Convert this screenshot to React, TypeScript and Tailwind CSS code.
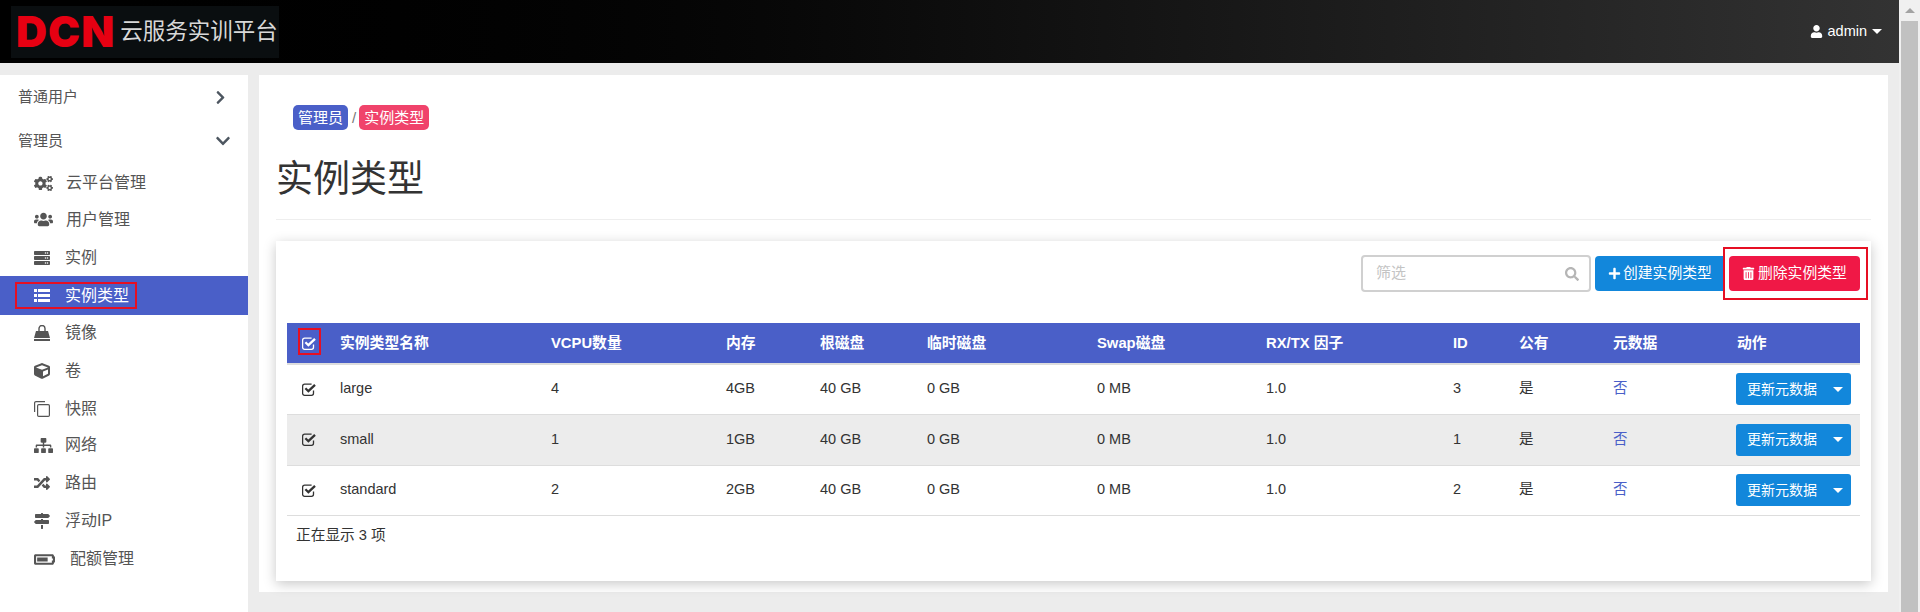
import type { ReactNode } from "react";
import {
  FaBatteryThreeQuarters,
  FaChevronDown,
  FaChevronRight,
  FaCogs,
  FaCube,
  FaMapSigns,
  FaPlus,
  FaRandom,
  FaSearch,
  FaServer,
  FaSitemap,
  FaTrashAlt,
  FaUser,
  FaUsers,
} from "react-icons/fa";

const FONT = "font-['Liberation_Sans','Noto_Sans_CJK_SC',sans-serif]";

// font-awesome 4 shapes the fa pack no longer has
function ListIcon() {
  return (
    <svg width="16" height="13" viewBox="0 0 16 13" fill="currentColor">
      <rect x="0" y="0" width="3" height="3" />
      <rect x="4" y="0" width="12" height="3" />
      <rect x="0" y="5" width="3" height="3" />
      <rect x="4" y="5" width="12" height="3" />
      <rect x="0" y="10" width="3" height="3" />
      <rect x="4" y="10" width="12" height="3" />
    </svg>
  );
}

function BagIcon() {
  return (
    <svg width="16" height="16" viewBox="0 0 16 16" fill="currentColor">
      <path d="M2 6h12l2 7H0z" />
      <rect x="0" y="14" width="16" height="2" />
      <path d="M5 7V3.5a3 3 0 0 1 6 0V7" fill="none" stroke="currentColor" strokeWidth="1.4" />
    </svg>
  );
}

function CloneIcon() {
  return (
    <svg width="16" height="16" viewBox="0 0 16 16" fill="none" stroke="currentColor" strokeWidth="1.2">
      <path d="M11 .6H2A1.4 1.4 0 0 0 .6 2v9" />
      <rect x="3.6" y="3.6" width="11.8" height="11.8" rx="1.2" />
    </svg>
  );
}

function CheckIcon() {
  return (
    <svg width="14" height="13" viewBox="0 0 14 13" fill="none" stroke="currentColor">
      <path d="M11.5 7.5v2.8a2 2 0 0 1-2 2H2.6a2 2 0 0 1-2-2V3.2a2 2 0 0 1 2-2h7" strokeWidth="1.3" />
      <path d="M3.4 5.2l3 3L13 1.8" strokeWidth="2.3" />
    </svg>
  );
}

function Caret({ className }: { className?: string }) {
  return <span className={`h-0 w-0 border-x-[5px] border-t-[5px] border-x-transparent border-t-white ${className ?? ""}`} />;
}

const menu: { icon: ReactNode; label: string; h: string; active?: boolean; gap?: string }[] = [
  { icon: <FaCogs size={19} />, label: "云平台管理", h: "h-[36px] pt-[2px]", gap: "pl-[1px]" },
  { icon: <FaUsers size={19} />, label: "用户管理", h: "h-[37px] pt-[2px]", gap: "pl-[1px]" },
  { icon: <FaServer size={16} />, label: "实例", h: "h-[39px] pt-[3px]" },
  { icon: <ListIcon />, label: "实例类型", h: "h-[39px]", active: true },
  { icon: <BagIcon />, label: "镜像", h: "h-[36px]" },
  { icon: <FaCube size={16} />, label: "卷", h: "h-[38px] pt-[2px]" },
  { icon: <CloneIcon />, label: "快照", h: "h-[37px] pt-[2px]" },
  { icon: <FaSitemap size={19} />, label: "网络", h: "h-[38px]" },
  { icon: <FaRandom size={16} />, label: "路由", h: "h-[38px]" },
  { icon: <FaMapSigns size={16} />, label: "浮动IP", h: "h-[37px]" },
  { icon: <FaBatteryThreeQuarters size={21} />, label: "配额管理", h: "h-[38px] pt-[2px]", gap: "pl-[5px]" },
];

const rows = [
  { name: "large", vcpu: "4", ram: "4GB", id: "3", h: "h-[50px]", bg: "bg-white" },
  { name: "small", vcpu: "1", ram: "1GB", id: "1", h: "h-[51px]", bg: "bg-[#ececec]" },
  { name: "standard", vcpu: "2", ram: "2GB", id: "2", h: "h-[50px]", bg: "bg-white" },
];

const heads = ["实例类型名称", "VCPU数量", "内存", "根磁盘", "临时磁盘", "Swap磁盘", "RX/TX 因子", "ID", "公有", "元数据", "动作"];

function Sidebar() {
  return (
    <aside className="h-[537px] w-[248px] shrink-0 bg-white text-[#555]">
      <div className="flex h-[42px] items-center justify-between pt-[2px] pr-[20px] pl-[18px] text-[15px]">
        <span>普通用户</span>
        <FaChevronRight size={15} className="text-[#4d5660]" />
      </div>
      <div className="flex h-[46px] items-center justify-between pt-[2px] pr-[17px] pl-[18px] text-[15px]">
        <span>管理员</span>
        <FaChevronDown size={16} className="text-[#4d5660]" />
      </div>
      <ul className="mt-[1px] text-[16px]">
        {menu.map((m) => (
          <li
            key={m.label}
            className={`relative flex items-center pl-[34px] ${m.h} ${m.active ? "bg-[#4a5fc8] text-white" : ""}`}
          >
            <span className={`flex w-[31px] shrink-0 ${m.active ? "text-white" : "text-[#555]"}`}>{m.icon}</span>
            <span className={m.gap}>{m.label}</span>
            {m.active && <span className="absolute top-[6px] left-[15px] h-[27px] w-[122px] border-2 border-[#e60f23]" />}
          </li>
        ))}
      </ul>
    </aside>
  );
}

function Toolbar() {
  return (
    <div className="relative flex h-[67px] items-start justify-end pt-[14px]">
      <div className="mr-[4px] flex h-[37px] w-[230px] items-center justify-between rounded-[4px] border-2 border-[#d0d0d0] bg-white pr-[10px] pl-[13px] text-[15px] text-[#c4c4c4]">
        <span>筛选</span>
        <FaSearch size={14} className="text-[#b5b5b5]" />
      </div>
      <button className="mt-[1px] flex h-[35px] w-[129px] items-center gap-[2px] rounded-l-[4px] bg-[#1287db] pl-[13px] text-[14.8px] text-white">
        <FaPlus size={13} />
        创建实例类型
      </button>
      <button className="mt-[1px] ml-[5px] flex h-[35px] w-[131px] items-center gap-[3px] rounded-[4px] bg-[#f01846] pl-[13px] text-[14.8px] text-white">
        <FaTrashAlt size={13} />
        删除实例类型
      </button>
      <span className="absolute top-[6px] right-[-8px] h-[53px] w-[145px] border-[2px] border-[#e60f23]" />
    </div>
  );
}

function Table() {
  return (
    <table className="w-[1573px] table-fixed border-collapse text-left text-[14.5px] text-[#333]">
      <colgroup>
        <col className="w-[45px]" />
        <col className="w-[211px]" />
        <col className="w-[175px]" />
        <col className="w-[94px]" />
        <col className="w-[107px]" />
        <col className="w-[170px]" />
        <col className="w-[169px]" />
        <col className="w-[187px]" />
        <col className="w-[66px]" />
        <col className="w-[94px]" />
        <col className="w-[124px]" />
        <col className="w-[131px]" />
      </colgroup>
      <thead>
        <tr className="h-[41px] border-b-2 border-[#ddd] bg-[#4a5fc8] text-[14.8px] text-white">
          <th className="relative p-0">
            <span className="ml-[15px] flex">
              <CheckIcon />
            </span>
            <span className="absolute top-[5px] left-[11px] h-[27px] w-[23px] border-2 border-[#e60f23]" />
          </th>
          {heads.map((h) => (
            <th key={h} className="px-[8px] font-bold">
              {h}
            </th>
          ))}
        </tr>
      </thead>
      <tbody>
        {rows.map((r) => (
          <tr key={r.name} className={`border-b border-[#ddd] ${r.h} ${r.bg}`}>
            <td className="p-0">
              <span className="ml-[15px] flex">
                <CheckIcon />
              </span>
            </td>
            <td className="px-[8px]">{r.name}</td>
            <td className="px-[8px]">{r.vcpu}</td>
            <td className="px-[8px]">{r.ram}</td>
            <td className="px-[8px]">40 GB</td>
            <td className="px-[8px]">0 GB</td>
            <td className="px-[8px]">0 MB</td>
            <td className="px-[8px]">1.0</td>
            <td className="px-[8px]">{r.id}</td>
            <td className="px-[8px]">是</td>
            <td className="px-[8px] text-[#4a5fc8]">否</td>
            <td className="px-[7px]">
              <div className="flex h-[32px] w-[115px] items-center justify-between rounded-[3px] bg-[#1287db] pr-[8px] pl-[11px] text-[14px] text-white">
                <span>更新元数据</span>
                <Caret />
              </div>
            </td>
          </tr>
        ))}
      </tbody>
    </table>
  );
}

export default function App() {
  return (
    <div className={`flex h-[612px] overflow-hidden bg-[#ececec] ${FONT}`}>
      <div className="w-[1899px] shrink-0">
        <header className="flex h-[63px] items-center justify-between bg-gradient-to-r from-black to-[#333] pr-[17px] pl-[11px]">
          <div className="flex h-[52px] w-[268px] items-center bg-[#0a0e10] pl-[5px]">
            <span className="font-['Inter'] text-[43px] leading-none font-black tracking-[1px] text-[#e60012]">DCN</span>
            <span className="ml-[5px] text-[22.5px] text-[#d8d8d8]">云服务实训平台</span>
          </div>
          <div className="flex items-center gap-[5px] text-[14.5px] text-white">
            <FaUser size={13} />
            <span>admin</span>
            <Caret />
          </div>
        </header>
        <div className="mt-[12px] flex items-start">
          <Sidebar />
          <main className="ml-[11px] h-[517px] w-[1629px] bg-white px-[17px]">
            <div className="flex items-center pt-[30px] text-[15px] leading-[21px] text-[#777]">
              <span className="ml-[17px] rounded-[5px] bg-[#4a5fc8] px-[5px] py-[2px] text-white">管理员</span>
              <span className="mr-[3px] ml-[4px]">/</span>
              <span className="rounded-[5px] bg-[#f0436b] px-[5px] py-[2px] text-white">实例类型</span>
            </div>
            <h1 className="mt-[26px] h-[63px] text-[37px] leading-[48px] text-[#333]">实例类型</h1>
            <div className="border-t border-[#eee]" />
            <section className="mt-[21px] h-[340px] bg-white px-[11px] shadow-[0_3px_12px_rgba(0,0,0,0.22)]">
              <Toolbar />
              <div className="mt-[15px]">
                <Table />
              </div>
              <p className="mt-[9px] pl-[9px] text-[14.7px] leading-[20px] text-[#333]">正在显示 3 项</p>
            </section>
          </main>
        </div>
      </div>
      <div className="flex w-[21px] shrink-0 flex-col bg-[#f0f0f0] px-[2px]">
        <div className="flex h-[21px] items-center justify-center">
          <span className="h-0 w-0 border-x-[5px] border-b-[5px] border-x-transparent border-b-[#a3a3a3]" />
        </div>
        <div className="flex-1 bg-[#c1c1c1]" />
      </div>
    </div>
  );
}
